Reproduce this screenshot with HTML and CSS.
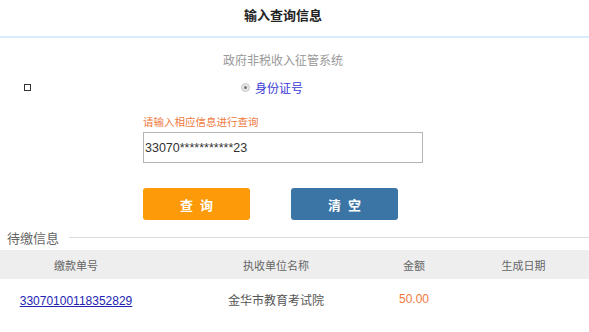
FILE: index.html
```html
<!DOCTYPE html>
<html lang="zh">
<head>
<meta charset="utf-8">
<title>输入查询信息</title>
<link rel="stylesheet" href="styles.css">
</head>
<body>
<div class="page">
  <div class="title">输入查询信息</div>
  <div class="main">
    <div class="subtitle">政府非税收入征管系统</div>
    <div class="radio-row">
      <span class="box"></span>
      <label class="radio"><span class="dot"></span>身份证号</label>
    </div>
    <div class="form">
      <div class="hint">请输入相应信息进行查询</div>
      <input class="field" type="text" value="33070***********23">
      <div class="actions">
        <button class="btn btn-query">查 询</button>
        <button class="btn btn-clear">清 空</button>
      </div>
    </div>
  </div>
  <div class="section">
    <span class="section-title">待缴信息</span>
    <span class="section-line"></span>
  </div>
  <div class="table">
    <div class="thead">
      <div class="c1">缴款单号</div>
      <div class="c2">执收单位名称</div>
      <div class="c3">金额</div>
      <div class="c4">生成日期</div>
    </div>
    <div class="trow">
      <div class="c1"><a class="link" href="#">33070100118352829</a></div>
      <div class="c2">金华市教育考试院</div>
      <div class="c3 amount">50.00</div>
      <div class="c4"></div>
    </div>
  </div>
</div>
</body>
</html>
```

FILE: styles.css
```css
* { box-sizing: border-box; }
html, body { margin: 0; padding: 0; background: #fff; }
body {
  font-family: "Noto Sans CJK SC", "Liberation Sans", sans-serif;
  color: #333;
}
.page { width: 589px; }
.title {
  width: 566px;
  height: 36px;
  padding-top: 6px;
  line-height: 18px;
  font-size: 13px;
  font-weight: bold;
  color: #222;
  text-align: center;
}
.main {
  border-top: 2px solid #d9eefa;
  width: 589px;
}
.subtitle {
  width: 566px;
  margin-top: 12px;
  line-height: 20px;
  font-size: 12px;
  color: #999;
  text-align: center;
}
.radio-row {
  display: flex;
  align-items: center;
  height: 20px;
  margin-top: 7px;
}
.box {
  width: 7px;
  height: 7px;
  border: 1px solid #333;
  margin-left: 24px;
}
.radio {
  display: flex;
  align-items: center;
  margin-left: 210px;
  font-size: 12px;
  color: #3a3ad6;
}
.dot {
  width: 9px;
  height: 9px;
  border-radius: 50%;
  background: #e6e6e6;
  border: 1px solid #c8c8c8;
  margin-right: 5px;
  display: flex;
  align-items: center;
  justify-content: center;
}
.dot::after {
  content: "";
  width: 3px;
  height: 3px;
  border-radius: 50%;
  background: #777;
}
.form {
  margin-left: 143px;
  width: 280px;
}
.hint {
  margin-top: 17px;
  line-height: 16px;
  font-size: 10.5px;
  color: #f0783c;
}
.field {
  display: block;
  margin-top: 2px;
  width: 280px;
  height: 31px;
  border: 1px solid #b4b4b4;
  padding: 0 1px;
  font-family: "Liberation Sans", sans-serif;
  font-size: 12.5px;
  color: #333;
  outline: none;
}
.actions {
  display: flex;
  gap: 41px;
  margin-top: 25px;
}
.btn {
  width: 107px;
  height: 32px;
  border: none;
  border-radius: 3px;
  color: #fff;
  font-family: "Noto Sans CJK SC", sans-serif;
  font-size: 13px;
  font-weight: bold;
  word-spacing: 4px;
  padding: 0;
}
.btn-query { background: #fd9a0a; }
.btn-clear { background: #3b75a6; }
.section {
  display: flex;
  align-items: center;
  margin-top: 10px;
  height: 16px;
}
.section-title {
  margin-left: 7px;
  font-size: 13px;
  color: #666;
  line-height: 16px;
}
.section-line {
  flex: 1;
  height: 1px;
  background: #dcdcdc;
  margin-left: 10px;
  margin-top: -1px;
}
.table { margin-top: 4px; }
.thead, .trow {
  display: grid;
  grid-template-columns: 152px 218px 88px 1fr;
  align-items: center;
  text-align: center;
}
.thead {
  height: 29px;
  background: #eeeeee;
  font-size: 11px;
  color: #666;
}
.trow {
  height: 40px;
  font-size: 12px;
  color: #555;
}
.c2 { padding-left: 30px; }
.link {
  font-family: "Liberation Sans", sans-serif;
  font-size: 12px;
  color: #2323b4;
  text-decoration: underline;
}
.amount {
  font-family: "Liberation Sans", sans-serif;
  color: #f0783c;
}
```
